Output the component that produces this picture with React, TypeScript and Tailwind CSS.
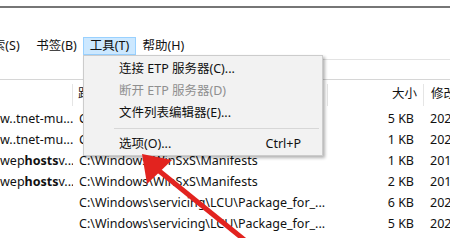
import React from "react";

const rows = [
  { name: "w..tnet-mu...", bold: "", rest: "", path: "C:\\Windows\\WinSxS\\Manifests", size: "5 KB", date: "2021" },
  { name: "w..tnet-mu...", bold: "", rest: "", path: "C:\\Windows\\WinSxS\\Manifests", size: "1 KB", date: "2021" },
  { name: "wep", bold: "hosts", rest: "v...", path: "C:\\Windows\\WinSxS\\Manifests", size: "1 KB", date: "2019" },
  { name: "wep", bold: "hosts", rest: "v...", path: "C:\\Windows\\WinSxS\\Manifests", size: "2 KB", date: "2019" },
  { name: "", bold: "", rest: "", path: "C:\\Windows\\servicing\\LCU\\Package_for_...", size: "6 KB", date: "2021" },
  { name: "", bold: "", rest: "", path: "C:\\Windows\\servicing\\LCU\\Package_for_...", size: "5 KB", date: "2021" },
];

function MenuItem({ label, shortcut, disabled }: { label: string; shortcut?: string; disabled?: boolean }) {
  return (
    <div className={`flex items-center h-[22px] pl-[35px] pr-[21px] ${disabled ? "text-[#8f8f8f]" : "text-[#111]"}`}>
      <span className="flex-grow whitespace-nowrap">{label}</span>
      {shortcut && <span>{shortcut}</span>}
    </div>
  );
}

export default function App() {
  return (
    <div
      className="relative w-[450px] h-[238px] overflow-hidden bg-white text-[12.5px] text-[#111]"
      style={{ fontFamily: '"Noto Sans", "Noto Sans CJK SC", sans-serif' }}
    >
      {/* title area */}
      <div className="h-[6px]" />
      <div className="h-[2px] bg-[#767676]" />
      <div className="h-[29px]" />

      {/* menu bar */}
      <div className="flex items-center h-[18px] leading-none whitespace-nowrap">
        <div className="w-[60px] ml-[-30px] shrink-0 flex justify-center">搜索(S)</div>
        <div className="w-[53px] shrink-0 flex justify-center">书签(B)</div>
        <div className="w-[53px] h-[18px] shrink-0 flex items-center justify-center bg-[#cce8ff] border border-[#99d1ff]">工具(T)</div>
        <div className="w-[55px] shrink-0 flex justify-center">帮助(H)</div>
      </div>

      {/* toolbar / address row */}
      <div className="flex h-[25px] border-b border-[#d6d6d6]">
        <div className="flex-grow" />
        <div className="w-[128px] mt-[4px] border-t border-[#e3e3e3]" />
      </div>

      {/* column header */}
      <div className="flex h-[29px] items-center leading-none whitespace-nowrap">
        <div className="w-[73px] shrink-0 h-[22px] border-r border-[#e5e5e5]" />
        <div className="w-[255px] shrink-0 h-[22px] flex items-center pl-[5px] border-r border-[#e5e5e5]">路径</div>
        <div className="w-[96px] shrink-0 h-[22px] flex items-center justify-end pr-[6px] border-r border-[#e5e5e5]">大小</div>
        <div className="pl-[7px] shrink-0">修改日期</div>
      </div>

      {/* rows */}
      <div className="flex flex-col leading-none">
        {rows.map((r, i) => (
          <div key={i} className="flex h-[21px] items-center whitespace-nowrap">
            <div className="w-[73px] shrink-0 overflow-hidden">
              {r.name}
              {r.bold && <b className="font-bold">{r.bold}</b>}
              {r.rest}
            </div>
            <div className="w-[255px] shrink-0 pl-[6px] overflow-hidden">{r.path}</div>
            <div className="w-[96px] shrink-0 text-right pr-[10px]">{r.size}</div>
            <div className="pl-[6px] shrink-0">{r.date}</div>
          </div>
        ))}
      </div>

      {/* dropdown menu */}
      <div className="absolute left-[83px] top-[55px] w-[240px] h-[101px] bg-[#f2f2f2] border border-[#cccccc] shadow-[2px_2px_3px_rgba(0,0,0,0.3)] pt-[2px] leading-none">
        <MenuItem label="连接 ETP 服务器(C)..." />
        <MenuItem label="断开 ETP 服务器(D)" disabled />
        <MenuItem label="文件列表编辑器(E)..." />
        <div className="ml-[30px] mr-[3px] my-[4px] h-px bg-[#d7d7d7]" />
        <MenuItem label="选项(O)..." shortcut="Ctrl+P" />
      </div>

      {/* red arrow */}
      <svg className="absolute left-0 top-0" width="450" height="238" viewBox="0 0 450 238">
        <line x1="158" y1="170" x2="252" y2="246" stroke="#e2231f" strokeWidth="5" />
        <polygon points="142,154 172,160 147,184" fill="#e2231f" />
      </svg>
    </div>
  );
}
